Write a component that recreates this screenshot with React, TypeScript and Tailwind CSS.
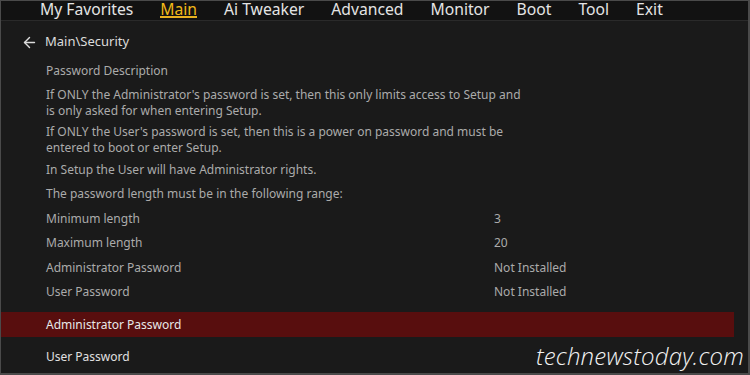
import { ArrowLeft } from "lucide-react";

const tabs = ["My Favorites", "Main", "Ai Tweaker", "Advanced", "Monitor", "Boot", "Tool", "Exit"];

const rows = [
  { label: "Minimum length", value: "3" },
  { label: "Maximum length", value: "20" },
  { label: "Administrator Password", value: "Not Installed" },
  { label: "User Password", value: "Not Installed" },
];

const App = () => {
  return (
    <div
      className="relative w-[750px] h-[375px] overflow-hidden bg-[#1a1a1a] border-l border-t border-r-2 border-b-2 border-[#4a4a4a]"
      style={{ fontFamily: '"Noto Sans", "Open Sans", sans-serif' }}
    >
      {/* top menu */}
      <div className="h-[20px] bg-[#121212] border-b border-[#2a2a2a] flex pl-[39px] gap-[27px]">
        {tabs.map((t) => (
          <div
            key={t}
            className={
              t === "Main"
                ? "relative text-[15.7px] leading-[17px] text-[#f0b818]"
                : "text-[15.7px] leading-[17px] text-[#e4e4e4]"
            }
          >
            {t}
            {t === "Main" && <div className="absolute left-0 right-0 top-[15px] h-[2px] bg-[#e8b020]" />}
          </div>
        ))}
      </div>

      {/* breadcrumb */}
      <div className="flex items-center h-[30px] mt-[6px] pl-[20px] text-[#dcdcdc]">
        <ArrowLeft size={17} strokeWidth={2} />
        <span className="ml-[7px] text-[13px]">Main\Security</span>
      </div>

      <div className="mt-[2px] text-[12px] text-[#ababab]">
        <div className="pl-[45px] leading-[24px]">Password Description</div>
        <div className="pl-[45px] mt-[4px] leading-[16px] w-[526px]">
          If ONLY the Administrator's password is set, then this only limits access to Setup and is only asked for
          when entering Setup.
        </div>
        <div className="pl-[45px] mt-[5px] leading-[16px] w-[526px]">
          If ONLY the User's password is set, then this is a power on password and must be entered to boot or enter
          Setup.
        </div>
        <div className="pl-[45px] mt-[2px] leading-[24px]">In Setup the User will have Administrator rights.</div>
        <div className="pl-[45px] leading-[24.5px]">The password length must be in the following range:</div>
        {rows.map((r) => (
          <div key={r.label} className="grid grid-cols-[448px_1fr] pl-[45px] leading-[24.5px]">
            <span>{r.label}</span>
            <span>{r.value}</span>
          </div>
        ))}
        <div className="mt-[7px] mr-[14px] h-[25px] bg-[#580e0e] pl-[45px] leading-[25px] text-[#e8e8e8]">
          Administrator Password
        </div>
        <div className="mt-[8px] pl-[45px] leading-[24px] text-[#e0e0e0]">User Password</div>
      </div>

      {/* watermark */}
      <div
        className="absolute right-[4px] bottom-[3px] text-[24px] leading-[28px] italic font-light tracking-[0.2px] text-[#f2f2f2]"
        style={{ fontFamily: '"Open Sans", sans-serif' }}
      >
        technewstoday.com
      </div>
    </div>
  );
};

export default App;
